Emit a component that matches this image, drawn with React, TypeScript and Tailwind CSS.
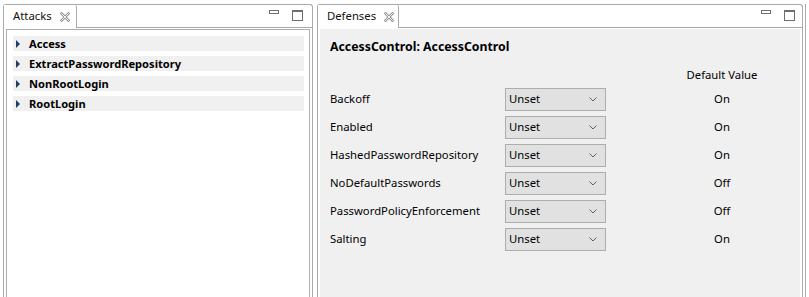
import React from "react";

const attacks = ["Access", "ExtractPasswordRepository", "NonRootLogin", "RootLogin"];

const defenses = [
  { name: "Backoff", value: "On" },
  { name: "Enabled", value: "On" },
  { name: "HashedPasswordRepository", value: "On" },
  { name: "NoDefaultPasswords", value: "Off" },
  { name: "PasswordPolicyEnforcement", value: "Off" },
  { name: "Salting", value: "On" },
];

// hollow X used by Eclipse view tabs
function CloseIcon() {
  return (
    <svg width="10" height="10" viewBox="0 0 10 10" className="shrink-0">
      <path d="M1.5 1.5 L8.5 8.5 M8.5 1.5 L1.5 8.5" stroke="#959595" strokeWidth="2.6" strokeLinecap="square" />
      <path d="M1.5 1.5 L8.5 8.5 M8.5 1.5 L1.5 8.5" stroke="#ffffff" strokeWidth="0.9" strokeLinecap="square" />
    </svg>
  );
}

function ViewButtons() {
  return (
    <div className="flex items-start gap-[13px] pt-[5px]">
      <div className="w-[10px] h-[4px] border border-[#6e6e6e]" />
      <div className="w-[11px] h-[11px] border border-[#6e6e6e] border-t-2" />
    </div>
  );
}

function Tab({ label, width }: { label: string; width: string }) {
  return (
    <div className={`${width} h-full flex items-center gap-[8px] pl-[9px] border-r border-[#a9a9a9] rounded-tr-[2px] bg-white`}>
      <span className="text-[11.3px] text-[#111]">{label}</span>
      <CloseIcon />
    </div>
  );
}

function Select() {
  return (
    <div className="w-[101px] h-[23px] flex items-center justify-between pl-[3px] pr-[8px] border border-[#adadad] bg-[#e1e1e1]">
      <span className="text-[11.3px] text-black">Unset</span>
      <svg width="8" height="5" viewBox="0 0 8 5">
        <path d="M0.5 0.5 L4 4 L7.5 0.5" stroke="#606060" strokeWidth="1" fill="none" />
      </svg>
    </div>
  );
}

export default function App() {
  return (
    <div
      className="w-[809px] h-[297px] overflow-hidden bg-white flex pt-[4px] pl-[3px]"
      style={{ fontFamily: '"Noto Sans", "Open Sans", sans-serif' }}
    >
      {/* Attacks view */}
      <div className="w-[310px] h-full flex flex-col border border-b-0 border-[#a9a9a9] rounded-t-[3px]">
        <div className="h-[23px] flex">
          <Tab label="Attacks" width="w-[73px]" />
          <div className="flex-1 flex justify-end pr-[9px] border-b border-[#a9a9a9]">
            <ViewButtons />
          </div>
        </div>
        <div className="flex-1 px-[2px] pt-[1px]">
          <div className="h-full border border-b-0 border-[#adadad] flex flex-col gap-[5px] pt-[6px] pl-[6px] pr-[5px]">
            {attacks.map((a) => (
              <div key={a} className="h-[15px] bg-[#f0f0f0] flex items-center">
                <svg width="5" height="8" viewBox="0 0 5 8" className="ml-[3px]">
                  <path d="M0 0 L4 4 L0 8 Z" fill="#1f3f66" />
                </svg>
                <span className="ml-[8px] text-[11.1px] font-bold text-black leading-none">{a}</span>
              </div>
            ))}
          </div>
        </div>
      </div>

      {/* Defenses view */}
      <div className="ml-[4px] w-[486px] h-full flex flex-col border border-b-0 border-[#a9a9a9] rounded-t-[3px]">
        <div className="h-[23px] flex">
          <Tab label="Defenses" width="w-[81px]" />
          <div className="flex-1 flex justify-end pr-[7px] border-b border-[#a9a9a9]">
            <ViewButtons />
          </div>
        </div>
        <div className="flex-1 px-[2px] pt-[1px]">
          <div className="h-full bg-[#f0f0f0] pl-[10px] pt-[9px] flex flex-col">
            <div className="h-[18px] flex items-center text-[12.3px] font-bold text-black">AccessControl: AccessControl</div>
            <div className="mt-[10px] h-[18px] flex items-center">
              <div className="ml-[332px] w-[120px] text-center text-[11.3px] text-black">Default Value</div>
            </div>
            <div className="mt-[4px] flex flex-col gap-[5px]">
              {defenses.map((d) => (
                <div key={d.name} className="h-[23px] flex items-center">
                  <div className="w-[175px] text-[11.3px] text-black">{d.name}</div>
                  <Select />
                  <div className="ml-[56px] w-[120px] text-center text-[11.3px] text-black">{d.value}</div>
                </div>
              ))}
            </div>
          </div>
        </div>
      </div>

      <div className="ml-[2px] h-full border-l border-[#a9a9a9]" />
    </div>
  );
}
